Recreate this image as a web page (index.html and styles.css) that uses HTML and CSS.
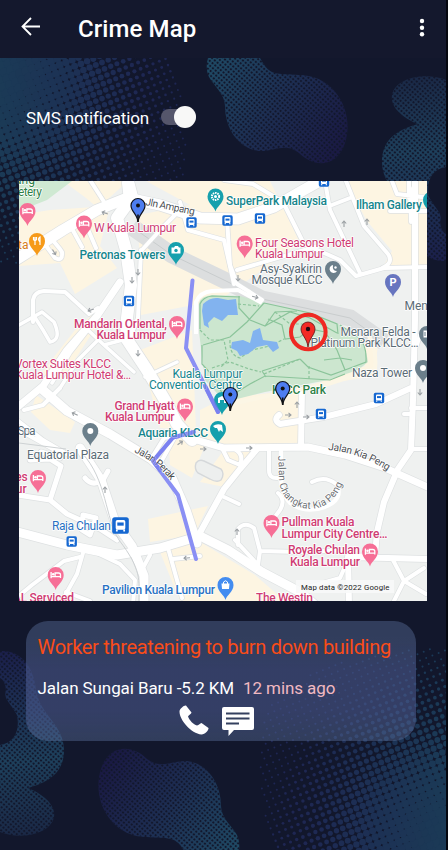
FILE: index.html
```html
<!DOCTYPE html>
<html lang="en">
<head>
<meta charset="utf-8">
<title>Crime Map</title>
<link rel="stylesheet" href="styles.css">
</head>
<body>
<div class="screen">
  <svg class="backdrop" viewBox="0 0 448 850" aria-hidden="true">
    <defs>
      <linearGradient id="blobA" gradientUnits="userSpaceOnUse" x1="215" y1="60" x2="335" y2="150"><stop offset="0" stop-color="#1f4b66"/><stop offset=".5" stop-color="#1d2f54"/><stop offset="1" stop-color="#1a1a45"/></linearGradient>
      <linearGradient id="blobC" gradientUnits="userSpaceOnUse" x1="10" y1="650" x2="30" y2="835"><stop offset="0" stop-color="#1b1f4c"/><stop offset=".6" stop-color="#1e425e"/><stop offset="1" stop-color="#1a2947"/></linearGradient>
      <pattern id="holes" width="3.600" height="3.600" patternUnits="userSpaceOnUse" patternTransform="rotate(40)"><circle cx="1.800" cy="1.800" r="1.200" fill="#12172c"/></pattern>
      <path id="b1" d="M208 58Q205 68 209 77C214 86 225 94 225 106C225 130 240 149 259 151C274 152 284 142 299 153C314 168 337 168 345 143C355 112 335 75 299 75C276 73 270 77 260 58Z"/>
      <path id="b2" d="M0 651C22 650 34 668 36 690C40 715 64 725 64 750C64 775 45 783 28 788C40 793 56 803 54 817C50 835 20 840 0 832V745C15 743 20 730 17 715C10 702 3 699 6 690Q5 680 0 678Z"/>
      <g id="shapes">
        <g id="halftone"></g>
        <use href="#b1" fill="url(#blobA)"/><use href="#b1" fill="url(#holes)"/>
        <g transform="rotate(180 223 456)"><use href="#b2" fill="url(#blobC)"/><use href="#b2" fill="url(#holes)"/></g>
      </g>
    </defs>
    <use href="#shapes"/>
    <use href="#shapes" transform="rotate(180 223 456)"/>
  </svg>

  <header class="bar">
    <svg class="back" viewBox="0 0 20 20"><path d="M19 9.5H2M10 1 1.5 9.5 10 18"/></svg>
    <h1>Crime Map</h1>
    <svg class="more" viewBox="0 0 6 20"><circle cx="3" cy="3" r="2.2"/><circle cx="3" cy="9.7" r="2.2"/><circle cx="3" cy="16.3" r="2.2"/></svg>
  </header>

  <main>
    <div class="setting"><span>SMS notification</span><span class="switch"><i></i></span></div>

    <svg class="map" viewBox="19 181 408 420">
      <defs>
        <path id="pin" d="M0 15C-1 10-8 7-8 0A8 8 0 0 1 8 0C8 7 1 10 0 15Z"/>
        <g id="hotel"><use href="#pin" fill="#f66f96"/><path d="M-4.6-3V3.2M4.8 3V0Q4.8-2 2.8-2H-.6V1M-4.6 1.6H4.8" fill="none" stroke="#fff" stroke-width="1.3"/><circle cx="-2.5" cy="-.8" r="1.3" fill="#fff"/></g>
        <g id="bus"><rect x="-5.2" y="-5.2" width="10.4" height="10.4" rx="1.6" fill="#1668d1"/><rect x="-3" y="-3.4" width="6" height="6" rx="1" fill="#fff"/><path d="M-2-1.9h4v2h-4z" fill="#1668d1"/><path d="M-2.3 2.5v1.2M2.3 2.5v1.2" stroke="#fff" stroke-width="1.1"/></g>
        <g id="spot"><path d="M0 16.5C-.5 9-7 6-7 0A7 7 0 0 1 7 0C7 6 .5 9 0 16.5Z" fill="#4d7df0" stroke="#10131c" stroke-width="1.2"/><path d="M0 9v7.500" stroke="#111" stroke-width="1.6"/><circle r="2" fill="#111"/></g>
        <g id="arrow"><path d="M-3 0H3M.5-2.2 3 0 .5 2.2" fill="none" stroke="#9a9fa3" stroke-width="1.1"/></g>
        <g id="roads" fill="none" stroke-linecap="round" stroke-linejoin="round">
          <path style="--w:11" d="M14 261 63 230 97 210 127 198 160 205 200 218 238 219 274 207 300 192 325 178"/>
          <path style="--w:12" d="M128 183 130 200 117 218 126 250 131 285 127 318 126 338 147 370 166 402 177 424 192 440"/>
          <path style="--w:4" d="M90 180 106 205M132 181 137 200M180 202 188 230 224 240 234 284M141 251 162 228 176 214M141 250 138 318 130 338M33 322V300Q34 292 44 291L65 292 89 314 98 308M60 249 51 238 44 243 55 258Q63 262 62 252ZM82 247 70 225M96 248 84 220"/>
          <path style="--w:7" d="M14 410 43 386 67 350 97 316 120 282"/>
          <path style="--w:3.5" d="M52 383 70 353 88 330 104 345 130 338M60 388 78 360 98 340M19 325 42 312 54 322Q62 340 50 342L43 330 34 316M145 377 177 362M147 371 161 387M104 345 134 372"/>
          <path style="--w:9" d="M43 390 67 411 110 434 151 459 172 478 186 510 197 543"/>
          <path style="--w:4" d="M17 420 43 440 72 457M19 430 60 453M60 388 43 405 24 410M151 459 164 438 188 434M175 437 161 462 172 478"/>
          <path style="--w:9" d="M80 448 101 480 115 522 132 546 144 576V605"/>
          <path style="--w:5" d="M17 495 50 500 67 514 100 529 117 540M50 500 61 466 50 459 30 460M60 458 41 452M85 478Q92 487 103 480L108 471M83 515 96 518 90 535 82 530Z"/>
          <path style="--w:9" d="M14 531 67 545 117 555 160 548 200 536 228 550 262 572 300 592 315 605"/>
          <path style="--w:4" d="M83 553 77 574 62 601M80 557 64 561 32 585 20 595M66 592 90 601M95 552 120 564 135 580 133 604M168 548 182 598M173 559 200 556M150 555 144 566"/>
          <path style="--w:6" d="M197 538 224 489 240 469 258 448"/>
          <path style="--w:7" d="M186 437 224 448 308 447 345 455 385 468 432 489"/>
          <path style="--w:6" d="M279 415Q273 420 280 424L324 417 376 404 411 388M302 390 301 447M415 178V320L413 400 411 450 398 469 384 502 377 532 375 556 348 557 349 605M348 557 430 559"/>
          <path style="--w:4" d="M224 180 253 184 283 202 304 244 340 260 356 276 384 268 430 267M227 219 230 265 237 284 262 300M237 270 318 246M325 181 330 210 360 273M346 181 364 226 388 254Q394 263 382 268M332 205 350 198M392 181 397 194 430 198M410 188 411 222M409 181V198M390 211H428M411 408H430M411 449H430M417 345 420 335 428 336M404 414H412"/>
          <path style="--w:4" d="M269 448V470Q269 479 278 478M312 482Q325 475 336 484M278 493Q286 500 280 510L274 518M238 545V529Q245 521 254 528L260 551 258 565M260 551 300 552 350 550M235 540 258 565M222 448 228 460 240 465Q244 455 236 450M308 587 340 578 350 555M404 581 424 568M404 581 393 560M404 581 394 601M404 581 426 594M224 497 239 504"/>
        </g>
        <path id="changkat" d="M278 456C280 474 276 490 288 500C302 513 331 515 343 482"/>
        <path id="kia" d="M328 450Q358 452 388 471"/>
        <path id="perak" d="M134 452Q158 463 172 482"/>
        <path id="ampang" d="M145 205 195 215"/>
      </defs>
      <path fill="#eff1f0" d="M19 181h408v420H19z"/>
      <path fill="#fdf5e2" d="M63 181H128L98 208 86 198ZM146 181H270L300 243 220 300 141 315 138 215 190 205ZM19 215 50 210 110 206 100 246 117 268 75 294 60 263 19 266ZM345 181h82v84h-43l8-14-25-30ZM40 375 75 330 95 312 98 324 65 375ZM36 395 75 422 70 433 50 430 31 412ZM140 350 192 330 196 430 160 428ZM224 398 300 390V445H200V410ZM360 335 378 345 374 376 300 388 340 376 365 366ZM168 430 205 445 192 478 170 465ZM148 519 208 506 194 535 150 542ZM160 552 197 540 255 575 285 601H180ZM224 450H256L224 487 200 482Z"/>
      <path fill="#cfe9d2" d="M19 181H72L47 200 19 211Z"/>
      <path fill="none" stroke="#dcdedf" stroke-width="17" d="M132 227 172 255 224 280 262 299 305 308 350 318 384 342"/>
      <path fill="none" stroke="#c9cdce" d="M132 227 172 255 224 280 262 299 305 308 350 318 384 342"/>
      <use href="#roads" class="casing"/>
      <use href="#roads" class="surface"/>
      <path fill="none" stroke="#fff" stroke-width="4" stroke-linecap="round" d="M281 450V478Q281 494 290 503 305 514 325 507 342 500 338 487"/>
      <path fill="none" stroke="#cdd1d3" d="M82 453C107 480 105 518 119 540 142 570 139 580 139 601M19 443 66 449"/>
      <path fill="#edefee" stroke="#d5d8da" stroke-width="1.4" d="M196 463Q199 459 204 461L221 469Q225 474 221 480 217 483 210 479L198 473Q194 469 196 463Z"/>

      <path fill="#cce6cf" d="M199 332V303Q201 296 212 295L240 296 265 303 310 312 337 323 358 337Q366 345 368 362L358 370 328 380 265 392 225 402 205 380Z"/>
      <path fill="none" stroke="#fff" stroke-width="4" stroke-linejoin="round" d="M196 334V302Q200 292 212 291L238 290 262 303M262 303 248 291"/>
      <path fill="none" stroke="#fcf6e5" stroke-width="4" d="M222 406 272 395 328 384 375 369Q377 350 369 336"/>
      <g fill="none" stroke="#8bc49a" stroke-width="1.2">
        <path d="M200 329V304Q203 297 212 296L240 297M264 303 247 322 230 337 203 345M264 303 310 313 337 324 338 334M239 296V308L250 320 265 326 275 312 297 311M268 319 282 325 285 339 300 337 310 329 325 332 337 350 345 370 331 375 308 367 300 359M324 360 340 358 352 360M345 370 366 362Q367 344 358 337L340 325M202 345V364L214 377 225 399M345 374 330 380 265 376 250 384 224 400M262 371 266 377M262 371 300 359M265 326 290 312 310 318 337 333"/>
        <path stroke-dasharray="3 2" d="M238 304 259 306M200 330 210 340 224 340 228 360 220 368M230 340Q229 355 240 358L252 350 270 346 284 339M275 312 290 324 308 324M212 368 230 362 249 369 261 372M264 374 300 359M309 366V380"/>
      </g>
      <path fill="#82b3ef" d="M203 304Q210 297 218 298L228 300 236 299 238 315 228 315 222 321 214 317 208 323 209 328 204 325 202 311ZM232 342 243 340 250 343 253 331 260 328 263 340 277 342 279 348 273 352 267 345 257 347 248 354 240 356 237 351 231 348Z"/>
      <path fill="none" stroke="#8a8ff4" stroke-width="4" stroke-linecap="round" stroke-linejoin="round" d="M192.500 280.500 186 348 218 412M194 432 173 437.500 153 461 178 495 196 559"/>

      <use href="#arrow" transform="translate(105 213) rotate(200)"/><use href="#arrow" transform="translate(54 252) rotate(60)"/><use href="#arrow" transform="translate(91 310) rotate(160)"/><use href="#arrow" transform="translate(75 414) rotate(205)"/><use href="#arrow" transform="translate(180 443) rotate(-35)"/><use href="#arrow" x="203" y="449"/><use href="#arrow" x="288" y="415"/><use href="#arrow" x="306" y="417"/><use href="#arrow" x="249" y="448"/><use href="#arrow" transform="translate(187 558) rotate(175)"/><use href="#arrow" transform="translate(255 297) rotate(15)"/>
      <g transform="rotate(90)"><use href="#arrow" x="280" y="-132"/><use href="#arrow" x="272" y="-138"/><use href="#arrow" x="353" y="-138"/><use href="#arrow" x="392" y="-420"/><use href="#arrow" x="278" y="-238"/></g>
      <g transform="rotate(-90)"><use href="#arrow" x="-224" y="344"/><use href="#arrow" x="-222" y="367"/><use href="#arrow" x="-405" y="297"/><use href="#arrow" x="-532" y="237"/><use href="#arrow" x="-490" y="105"/></g>

      <use href="#bus" x="191.500" y="222.500"/><use href="#bus" x="227.500" y="220.500"/><use href="#bus" x="260" y="218.500"/><use href="#bus" x="129" y="301"/><use href="#bus" x="324" y="181.500"/><use href="#bus" x="321" y="414"/><use href="#bus" x="379" y="398"/><use href="#bus" x="71.700" y="541.500"/>
      <use href="#bus" transform="translate(120.500 525.500) scale(1.6)"/>

      <use href="#hotel" x="27.500" y="211"/><use href="#hotel" x="84" y="223.500"/><use href="#hotel" x="244.700" y="243.500"/><use href="#hotel" x="177" y="324"/><use href="#hotel" x="185" y="406.500"/><use href="#hotel" x="38" y="478"/><use href="#hotel" x="55.700" y="575"/><use href="#hotel" x="271.500" y="523"/><use href="#hotel" x="370" y="551.500"/>
      <g transform="translate(37 241)"><use href="#pin" fill="#f69a19"/><path d="M-3.500-4V-1.500Q-2 1-.5-1.500V-4M-2-4V4M3 4V-4Q0-2 3 1" fill="none" stroke="#fff" stroke-width="1.2"/></g>
      <g transform="translate(176 250)"><use href="#pin" fill="#16a0ad"/><path d="M-4.500-2.500H-2L-1-4H2L3-2.500H4.500V3.500H-4.500Z" fill="#fff"/><circle cy=".5" r="1.700" fill="#16a0ad"/></g>
      <g transform="translate(215.500 196.500)"><use href="#pin" fill="#16a0ad"/><circle r="3.600" fill="none" stroke="#fff" stroke-width="2" stroke-dasharray="1.500 .8"/><circle r="1.500" fill="#fff"/></g>
      <g transform="translate(431 200)"><use href="#pin" fill="#16a0ad"/></g>
      <g transform="translate(222 400)"><use href="#pin" fill="#16a0ad"/><path d="M-4 3V-2L0-4 4-2V3H2V0H-2V3Z" fill="#fff"/></g>
      <g transform="translate(218 429)"><use href="#pin" fill="#16a0ad"/><path d="M-5-3Q-1-6 4-4L5 3 2 1 1 3-1-1-3-1Z" fill="#fff"/></g>
      <g transform="translate(333 269)"><use href="#pin" fill="#6b7f8b"/><path d="M0-4A4 4 0 1 0 4 2Q-1 2 0-4Z" fill="#fff"/><circle cx="2.500" cy="-1.500" r="1.200" fill="#fff"/></g>
      <g transform="translate(90.300 431)"><use href="#pin" fill="#6b7f8b"/><circle r="3" fill="#fff"/></g>
      <g transform="translate(427 334)"><use href="#pin" fill="#6b7f8b"/><path d="M-4-4H2V4H-4ZM-2-2V2" fill="#fff" stroke="#6b7f8b"/></g>
      <g transform="translate(423 368)"><use href="#pin" fill="#6b7f8b"/><circle r="3" fill="#fff"/></g>
      <g transform="translate(393 282)"><use href="#pin" fill="#6775bf"/><text class="p" x="-3.500" y="4">P</text></g>
      <g transform="translate(225.500 585)"><use href="#pin" fill="#438cf0"/><path d="M-4-1.500H4L3.500 4H-3.500Z" fill="#fff"/><path d="M-2-1V-3Q0-5.500 2-3V-1" fill="none" stroke="#fff"/></g>

      <g class="labels">
        <text class="green" x="15" y="184">ang</text><text class="green" x="18" y="195.500" textLength="24">etery</text>
        <text class="pink" x="94" y="231.500" textLength="82">W Kuala Lumpur</text>
        <text class="teal" x="79.500" y="258.500" textLength="86">Petronas Towers</text>
        <text class="teal" x="226" y="205" textLength="101">SuperPark Malaysia</text>
        <text class="teal" x="356" y="209" textLength="66">Ilham Gallery</text>
        <text class="pink" x="255" y="246.500" textLength="99">Four Seasons Hotel</text><text class="pink" x="255" y="257.700" textLength="69">Kuala Lumpur</text>
        <text x="260" y="272.500" textLength="62">Asy-Syakirin</text><text x="251.500" y="283.500" textLength="71">Mosque KLCC</text>
        <text x="404.500" y="310">Menara</text>
        <text class="orange" x="18" y="249">ta</text>
        <text class="pink strong" x="74" y="327.500" textLength="93">Mandarin Oriental,</text><text class="pink strong" x="96.500" y="338.700" textLength="69.500">Kuala Lumpur</text>
        <text class="pink" x="15" y="367.500" textLength="96">Vortex Suites KLCC</text><text class="pink" x="15" y="378.800" textLength="116">Kuala Lumpur Hotel &amp;…</text>
        <text class="teal light" x="172.500" y="378" textLength="70">Kuala Lumpur</text><text class="teal light" x="149" y="389.200" textLength="93">Convention Centre</text>
        <text class="pink strong" x="114.500" y="409.700" textLength="60">Grand Hyatt</text><text class="pink strong" x="105" y="421" textLength="69.500">Kuala Lumpur</text>
        <text class="teal" x="138" y="436.500" textLength="70">Aquaria KLCC</text>
        <text x="17.500" y="434.500" textLength="18">Spa</text>
        <text x="27" y="459" textLength="82">Equatorial Plaza</text>
        <text class="pink strong" x="11" y="481">res</text><text class="pink strong" x="9" y="492.500">pur</text>
        <text class="blue" x="52" y="530" textLength="59">Raja Chulan</text>
        <text class="blue strong" x="102" y="594" textLength="113">Pavilion Kuala Lumpur</text>
        <text class="pink strong" x="13" y="602" textLength="61">AL Serviced</text><text class="pink strong" x="256" y="601.700" textLength="57">The Westin</text>
        <text class="pink strong" x="281.500" y="526" textLength="73">Pullman Kuala</text><text class="pink strong" x="281.500" y="537.500" textLength="106">Lumpur City Centre…</text>
        <text class="pink strong" x="288" y="554" textLength="72">Royale Chulan</text><text class="pink strong" x="290" y="565.500" textLength="70">Kuala Lumpur</text>
        <text x="340.500" y="336" textLength="75">Menara Felda -</text><text x="310.500" y="347.200" textLength="108">Platinum Park KLCC…</text>
        <text x="352" y="376.500" textLength="60">Naza Tower</text>
        <text class="green strong" x="272" y="393.500" textLength="54">KLCC Park</text>
        <g class="street"><text><textPath href="#ampang" textLength="50">Jln Ampang</textPath></text><text><textPath href="#kia" textLength="64">Jalan Kia Peng</textPath></text><text><textPath href="#perak" textLength="47">Jalan Perak</textPath></text><text class="wide"><textPath href="#changkat">Jalan Changkat Kia Peng</textPath></text></g>
      </g>
      <path fill="none" stroke="#7379ee" stroke-opacity=".65" stroke-width="4" stroke-linecap="round" stroke-linejoin="round" d="M205 386 218 412M194 432 173 437.500 153 461 160 470"/>
      <path fill="#f8f9f9" fill-opacity=".85" d="M296 580h98v13h-98z"/><text class="copyright" x="301" y="589.500" textLength="88.500">Map data ©2022 Google</text>
      <use href="#spot" x="138" y="205.500"/><use href="#spot" x="230.300" y="394.500"/><use href="#spot" x="282.700" y="388.500"/>
      <path fill="#f32b25" stroke="#5d1115" stroke-width=".8" d="M308 347C307 338 301 335 301 329A7 7 0 0 1 315 329C315 335 309 338 308 347Z"/><circle cx="308" cy="329" r="2.200" fill="#210b12"/>
      <circle cx="308.300" cy="332" r="17.300" fill="none" stroke="#ef2923" stroke-width="4"/>
    </svg>

    <article class="alert">
      <h2>Worker threatening to burn down building</h2>
      <p><span class="place">Jalan Sungai Baru -5.2 KM</span><span class="time">12 mins ago</span></p>
      <div class="actions">
        <svg class="call" viewBox="0 0 30 30"><path d="M.5 6.500C.5 4 5 0 7 .5L12.500 7.500C12.500 9 9.500 10 9 11.500C10.500 15.500 14.500 19.500 18 20.500C20 20.500 21 18 22.500 18L29.500 23C30 25 26 29.500 22.500 29.500C12 28.500 .5 15 .5 6.500Z"/></svg>
        <svg class="chat" viewBox="0 0 32 30"><path d="M2 0H30Q32 0 32 2V21Q32 23 30 23H12L6.500 29V23H2Q0 23 0 21V2Q0 0 2 0Z"/><path class="lines" d="M4 6.500H27.500M4 11.500H27.500M4 16.500H17"/></svg>
      </div>
    </article>
  </main>
</div>
<script src="halftone.js"></script>
</body>
</html>
```
FILE: styles.css
```css
* { box-sizing: border-box; }
body { margin: 0; background: #12172c; font-family: Roboto, sans-serif; }
.screen { position: relative; width: 448px; height: 850px; overflow: hidden; background: #12172c; border-right: 2px solid #05070f; }
.backdrop { position: absolute; left: 0; top: 0; width: 448px; height: 850px; }
.bar { position: relative; display: flex; align-items: center; height: 58px; padding: 0 21px 2px 20.500px; background: #14182d; color: #fff; }
.back { width: 20px; height: 20px; margin-top: -2px; fill: none; stroke: #fff; stroke-width: 1.8; }
.bar h1 { flex: 1; margin: 2px 0 0 37.500px; font-size: 24px; font-weight: 500; letter-spacing: .1px; line-height: 30px; }
.more { width: 6px; height: 20px; fill: #fff; }
main { position: relative; display: flex; flex-direction: column; align-items: flex-start; }
.setting { display: flex; align-items: center; height: 123px; padding: 0 0 4px 26px; color: #fff; font-size: 17px; letter-spacing: -.12px; gap: 12px; }
.switch { display: flex; justify-content: flex-end; align-items: center; width: 35px; height: 16px; margin-top: -1px; border-radius: 8px; background: #55566b; }
.switch i { width: 22px; height: 22px; flex: none; border-radius: 50%; background: #f8f8f7; }
.map { display: block; width: 408px; height: 420px; margin-left: 18.500px; }
#roads path { stroke-width: calc((var(--w) + var(--rim)) * 1px); }
.casing { --rim: 1.4; stroke: #dee1e2; }
.surface { --rim: 0; stroke: #fff; }
.labels text { font-size: 12px; font-weight: 400; fill: #5b6c76; stroke: #fff; stroke-width: 1.500px; paint-order: stroke; stroke-linejoin: round; }
.labels .pink { fill: #cf3c73; }
.labels .teal { fill: #15858c; font-weight: 500; }
.labels .light { font-weight: 400; }
.labels .green { fill: #2d8048; }
.labels .orange { fill: #d77b20; }
.labels .blue { fill: #2871c3; }
.labels .strong { font-weight: 500; }
.labels .street text { font-size: 10.200px; fill: #4c5054; }
.labels .street .wide { font-size: 10px; letter-spacing: .15px; fill: #6c7074; }
.copyright { font-size: 7.800px; fill: #222; }
.p { font-size: 11px; font-weight: 700; fill: #fff; }
.alert { width: 390px; height: 120px; margin: 20px 0 0 26px; padding: 12px 11.500px 0; border-radius: 22px; background: linear-gradient(rgba(60, 66, 132, 0) 12%, rgba(60, 66, 132, .24) 40%, rgba(60, 66, 132, .24) 75%, rgba(60, 66, 132, 0)), rgba(97, 121, 165, .4); color: #fff; }
.alert h2 { margin: 1px 0 0; color: #fa4c18; font-size: 20px; font-weight: 400; line-height: 26px; white-space: nowrap; letter-spacing: -.31px; }
.alert p { display: flex; gap: 9px; margin: 16px 0 0; font-size: 17px; line-height: 24px; white-space: nowrap; letter-spacing: -.09px; }
.time { color: #f1b9c1; }
.actions { display: flex; gap: 13px; margin: 5px 0 0 141.500px; }
.actions svg { fill: #fff; }
.call { width: 30px; height: 30px; }
.chat { width: 32px; height: 30px; margin-top: 2px; }
.chat .lines { fill: none; stroke: #34405f; stroke-width: 2.2; }
```
FILE: halftone.js
```js
// Halftone field: dots shrink with distance from the top-left corner.
(function () {
  var ns = "http://www.w3.org/2000/svg";
  var group = document.getElementById("halftone");
  var step = 6.7, angle = -0.38;
  var c = Math.cos(angle), s = Math.sin(angle);
  for (var i = -60; i < 60; i++) {
    for (var j = -60; j < 60; j++) {
      var x = (i * c - j * s) * step, y = 60 + (i * s + j * c) * step;
      if (x < -4 || y < 54 || y > 266) continue;
      var edge = 186 - Math.pow(y - 145, 2) / 560;
      if (y > 180) edge = 184 * Math.sqrt(Math.max(0, 1 - Math.pow((y - 180) / 84, 2)));
      if (x > edge) continue;
      var d = Math.hypot(x, y - 70);
      var r = Math.max(1, 5.4 - d * 0.0245);
      var t = Math.min(1, x / 150);
      var dot = document.createElementNS(ns, "circle");
      dot.setAttribute("cx", x.toFixed(1));
      dot.setAttribute("cy", y.toFixed(1));
      dot.setAttribute("r", r.toFixed(2));
      dot.setAttribute("fill", "rgb(" + Math.round(27 + 3 * t) + "," + Math.round(58 - 20 * t) + "," + Math.round(86 - 4 * t) + ")");
      group.appendChild(dot);
    }
  }
})();
```
